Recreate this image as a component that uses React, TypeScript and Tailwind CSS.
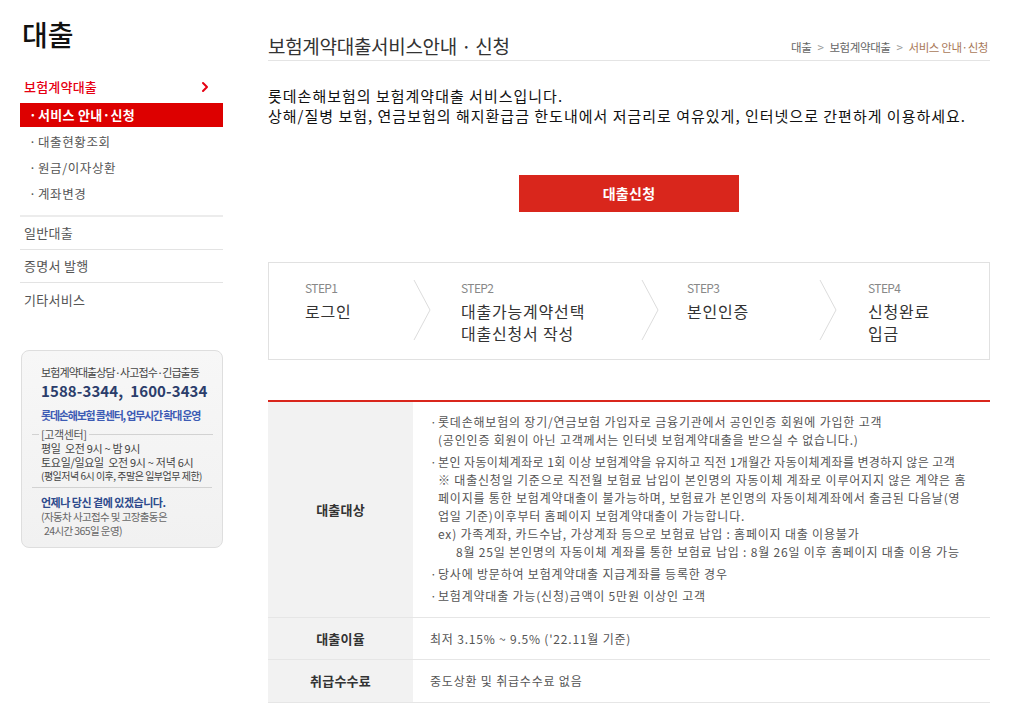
import { ChevronRight } from "lucide-react";

const subMenu = ["대출현황조회", "원금/이자상환", "계좌변경"];
const mainMenu = ["일반대출", "증명서 발행", "기타서비스"];

const steps = [
  { label: "STEP1", lines: ["로그인"], width: "w-[108px]" },
  { label: "STEP2", lines: ["대출가능계약선택", "대출신청서 작성"], width: "w-[180px]" },
  { label: "STEP3", lines: ["본인인증"], width: "w-[132px]" },
  { label: "STEP4", lines: ["신청완료", "입금"], width: "w-[120px]" },
];

function StepArrow({ className }: { className: string }) {
  return (
    <svg width="18" height="60" viewBox="0 0 18 60" className={className}>
      <polyline points="1,0 17,30 1,60" fill="none" stroke="#dcdcdc" strokeWidth="1" />
    </svg>
  );
}

function Bullet({ children }: { children: React.ReactNode }) {
  return (
    <div className="flex mt-[4px] first:mt-0">
      <span className="w-[9px] shrink-0 pl-[1px]">·</span>
      <div className="whitespace-nowrap">{children}</div>
    </div>
  );
}

function Sidebar() {
  return (
    <aside className="w-[203px] shrink-0 pt-[16px]">
      <h1 className="text-[28px] leading-[36px] font-medium text-[#111] pl-[2px]">대출</h1>

      <div className="mt-[25px] flex items-center justify-between h-[20px] pl-[4px] pr-[10px]">
        <span className="text-[13px] font-medium text-[#e60012] tracking-[0.2px]">보험계약대출</span>
        <ChevronRight className="w-[16px] h-[16px] text-[#e60012]" strokeWidth={3} />
      </div>
      <div className="mt-[6px] h-[24px] bg-[#dd0000] flex items-center pl-[9px] text-[13px] font-bold text-white tracking-[0.3px]">
        <span className="w-[9px]">·</span>
        <span>서비스 안내·신청</span>
      </div>
      <ul className="mt-[2px] mb-[8px]">
        {subMenu.map((item) => (
          <li key={item} className="h-[26px] flex items-center pl-[9px] text-[12.5px] text-[#555] tracking-[0.6px]">
            <span className="w-[9px]">·</span>
            <span>{item}</span>
          </li>
        ))}
      </ul>
      <ul className="border-t-2 border-[#ececec]">
        {mainMenu.map((item, i) => (
          <li
            key={item}
            className={`h-[33px] flex items-center pl-[4px] text-[13px] text-[#555] tracking-[0.3px] ${i < mainMenu.length - 1 ? "border-b border-[#e3e3e3]" : ""}`}
          >
            {item}
          </li>
        ))}
      </ul>

      <div className="mt-[34px] ml-[1px] h-[198px] rounded-[8px] border border-[#dedede] bg-gradient-to-b from-[#f7f7f7] to-[#f1f1f1] pt-[13px] text-[#444] whitespace-nowrap">
        <p className="pl-[19px] text-[11px] leading-[16px] tracking-[-0.9px]">보험계약대출상담·사고접수·긴급출동</p>
        <p className="pl-[19px] mt-[1px] text-[15px] leading-[20px] font-bold text-[#2b3d6b] tracking-[0.1px]">1588-3344,&nbsp; 1600-3434</p>
        <p className="pl-[19px] mt-[6px] text-[11px] leading-[16px] font-bold text-[#3d5bb4] tracking-[-1.2px]">롯데손해보험 콜센터, 업무시간 확대 운영</p>
        <div className="mt-[4px] flex items-center pl-[10px] pr-[9px]">
          <span className="w-[7px] border-t border-[#d2d2d2]" />
          <span className="px-[2px] text-[11px] leading-[14px] tracking-[-0.4px] text-[#555]">[고객센터]</span>
          <span className="flex-1 border-t border-[#d2d2d2]" />
        </div>
        <p className="pl-[19px] text-[11px] leading-[14px] tracking-[-0.3px]">평일&nbsp; 오전 9시 ~ 밤 9시</p>
        <p className="pl-[19px] text-[11px] leading-[14px] tracking-[-0.3px]">토요일/일요일&nbsp; 오전 9시 ~ 저녁 6시</p>
        <p className="pl-[19px] text-[10px] leading-[14px] tracking-[-0.5px]">(평일저녁 6시 이후, 주말은 일부업무 제한)</p>
        <div className="mt-[4px] mx-[10px] border-t border-[#d2d2d2]" />
        <p className="pl-[19px] mt-[6px] text-[11px] leading-[16px] font-bold text-[#2d4a8c] tracking-[-0.5px]">언제나 당신 곁에 있겠습니다.</p>
        <p className="pl-[19px] text-[10.5px] leading-[14px] tracking-[-0.6px] text-[#666]">(자동차 사고접수 및 고장출동은</p>
        <p className="pl-[22px] text-[10.5px] leading-[14px] tracking-[-0.6px] text-[#666]">24시간 365일 운영)</p>
      </div>
    </aside>
  );
}

export default function App() {
  return (
    <div
      className="min-h-screen bg-white flex pl-[20px]"
      style={{ fontFamily: '"Noto Sans CJK KR", "Noto Sans", sans-serif' }}
    >
      <Sidebar />

      <main className="ml-[45px] w-[722px] pt-[33px]">
        <div className="flex items-center justify-between h-[28px] border-b border-[#e4e4e4] pb-[1px]">
          <h2 className="text-[19px] leading-[26px] text-[#333] tracking-[-0.3px]">보험계약대출서비스안내 · 신청</h2>
          <nav className="flex items-center gap-[6px] text-[11.5px] text-[#666] tracking-[-0.4px] pr-[2px] mt-[4px]">
            <span>대출</span>
            <span className="text-[#999]">&gt;</span>
            <span>보험계약대출</span>
            <span className="text-[#999]">&gt;</span>
            <span className="text-[#a9795a]">서비스 안내·신청</span>
          </nav>
        </div>

        <div className="mt-[25px] text-[15px] leading-[20px] text-[#111] tracking-[1px] whitespace-nowrap">
          <p>롯데손해보험의 보험계약대출 서비스입니다.</p>
          <p>상해/질병 보험, 연금보험의 해지환급금 한도내에서 저금리로 여유있게, 인터넷으로 간편하게 이용하세요.</p>
        </div>

        <div className="mt-[49px] flex justify-center">
          <button className="w-[220px] h-[37px] bg-[#d9261c] text-white text-[14px] font-bold tracking-[0.3px]">대출신청</button>
        </div>

        <div className="mt-[50px] h-[98px] border border-[#e1e1e1] flex items-start pt-[17px] pl-[36px]">
          {steps.map((step, i) => (
            <div key={step.label} className="flex items-start">
              <div className={step.width}>
                <p className="text-[12px] leading-[16px] text-[#888] tracking-[-0.6px]">{step.label}</p>
                <div className="mt-[4px] text-[16px] leading-[22px] text-[#333] tracking-[0.8px] whitespace-nowrap">
                  {step.lines.map((line) => (
                    <p key={line}>{line}</p>
                  ))}
                </div>
              </div>
              {i < steps.length - 1 && (
                <StepArrow className={i === 0 ? "mr-[30px]" : i === 1 ? "mr-[28px]" : "mr-[31px]"} />
              )}
            </div>
          ))}
        </div>

        <table className="mt-[40px] w-full border-t-2 border-[#d9261c] border-collapse text-[12px] text-[#555] tracking-[0.8px]">
          <tbody>
            <tr className="border-b border-[#e6e6e6]">
              <th className="w-[145px] bg-[#f2f2f2] text-[13px] font-bold text-[#333] tracking-[0.2px]">대출대상</th>
              <td className="pl-[16px] pt-[11px] pb-[12px] leading-[18px]">
                <Bullet>
                  <p>롯데손해보험의 장기/연금보험 가입자로 금융기관에서 공인인증 회원에 가입한 고객</p>
                  <p>(공인인증 회원이 아닌 고객께서는 인터넷 보험계약대출을 받으실 수 없습니다.)</p>
                </Bullet>
                <Bullet>
                  <p className="tracking-[0.4px]">본인 자동이체계좌로 1회 이상 보험계약을 유지하고 직전 1개월간 자동이체계좌를 변경하지 않은 고객</p>
                  <p>※ 대출신청일 기준으로 직전월 보험료 납입이 본인명의 자동이체 계좌로 이루어지지 않은 계약은 홈</p>
                  <p>페이지를 통한 보험계약대출이 불가능하며, 보험료가 본인명의 자동이체계좌에서 출금된 다음날(영</p>
                  <p>업일 기준)이후부터 홈페이지 보험계약대출이 가능합니다.</p>
                  <p>ex) 가족계좌, 카드수납, 가상계좌 등으로 보험료 납입 : 홈페이지 대출 이용불가</p>
                  <p className="pl-[18px]">8월 25일 본인명의 자동이체 계좌를 통한 보험료 납입 : 8월 26일 이후 홈페이지 대출 이용 가능</p>
                </Bullet>
                <Bullet>
                  <p>당사에 방문하여 보험계약대출 지급계좌를 등록한 경우</p>
                </Bullet>
                <Bullet>
                  <p>보험계약대출 가능(신청)금액이 5만원 이상인 고객</p>
                </Bullet>
              </td>
            </tr>
            <tr className="border-b border-[#e6e6e6]">
              <th className="bg-[#f2f2f2] text-[13px] font-bold text-[#333] h-[42px] tracking-[0.2px]">대출이율</th>
              <td className="pl-[17px]">최저 3.15% ~ 9.5% ('22.11월 기준)</td>
            </tr>
            <tr className="border-b border-[#e6e6e6]">
              <th className="bg-[#f2f2f2] text-[13px] font-bold text-[#333] h-[43px] tracking-[0.2px]">취급수수료</th>
              <td className="pl-[17px]">중도상환 및 취급수수료 없음</td>
            </tr>
          </tbody>
        </table>
      </main>
    </div>
  );
}
